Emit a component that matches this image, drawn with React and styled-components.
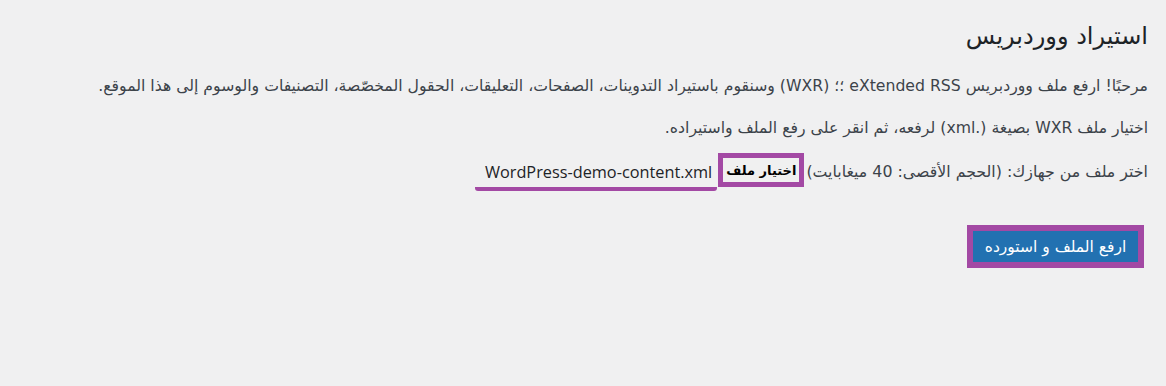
import React from "react"
import styled, { createGlobalStyle } from "styled-components"

const Global = createGlobalStyle`
  html, body {
    margin: 0;
    padding: 0;
    background: #f0f0f1;
  }
  body {
    font-family: "DejaVu Sans", "Noto Sans", sans-serif;
    color: #3c434a;
  }
`

const Wrap = styled.div`
  direction: rtl;
  padding: 21px 18px 0 20px;
  min-height: 386px;
  box-sizing: border-box;
`

const Title = styled.h1`
  margin: 0 0 21px;
  font-size: 24px;
  font-weight: 400;
  line-height: 31px;
  color: #1d2327;
`

const Para = styled.p`
  margin: 0 0 ${(p) => p.$gap || 16}px;
  font-size: 15.7px;
  line-height: 26px;
`

const UploadRow = styled.div`
  display: flex;
  align-items: flex-start;
  font-size: 15.8px;
  margin-bottom: 34px;
`

const Hint = styled.span`
  line-height: 34px;
  padding-top: 2px;
  margin-left: 2px;
`

const PickButton = styled.label`
  display: inline-flex;
  align-items: center;
  box-sizing: border-box;
  height: 34px;
  padding: 0 3px;
  border: 5px solid #a349a4;
  background: #f0f0f0;
  color: #000;
  font-size: 13px;
  font-weight: 700;
`

const FileName = styled.span`
  direction: ltr;
  font-family: "Open Sans", "Noto Sans", sans-serif;
  font-size: 16.3px;
  line-height: 22px;
  color: #1d2327;
  padding: 0 5px 4px 10px;
  border-bottom: 4px solid #a349a4;
  border-radius: 0 0 3px 3px;
  margin: 8px 1px 0 0;
`

const Submit = styled.button`
  display: block;
  box-sizing: border-box;
  font-family: inherit;
  font-size: 15.5px;
  color: #fff;
  background: #2271b1;
  border: 6px solid #a349a4;
  margin-right: 4px;
  padding: 0 10px;
  height: 43px;
  width: 177px;
  cursor: pointer;
`

export default function App() {
  return (
    <>
      <Global />
      <Wrap>
        <Title>استيراد ووردبريس</Title>
        <Para>
          مرحبًا! ارفع ملف ووردبريس eXtended RSS ؛؛ (WXR) وسنقوم باستيراد التدوينات، الصفحات، التعليقات، الحقول المخصّصة، التصنيفات والوسوم إلى هذا الموقع.
        </Para>
        <Para $gap={12}>اختيار ملف WXR بصيغة (.xml) لرفعه، ثم انقر على رفع الملف واستيراده.</Para>
        <UploadRow>
          <Hint>اختر ملف من جهازك: (الحجم الأقصى: 40 ميغابايت)</Hint>
          <PickButton>اختيار ملف</PickButton>
          <FileName>WordPress-demo-content.xml</FileName>
        </UploadRow>
        <Submit>ارفع الملف و استورده</Submit>
      </Wrap>
    </>
  )
}
